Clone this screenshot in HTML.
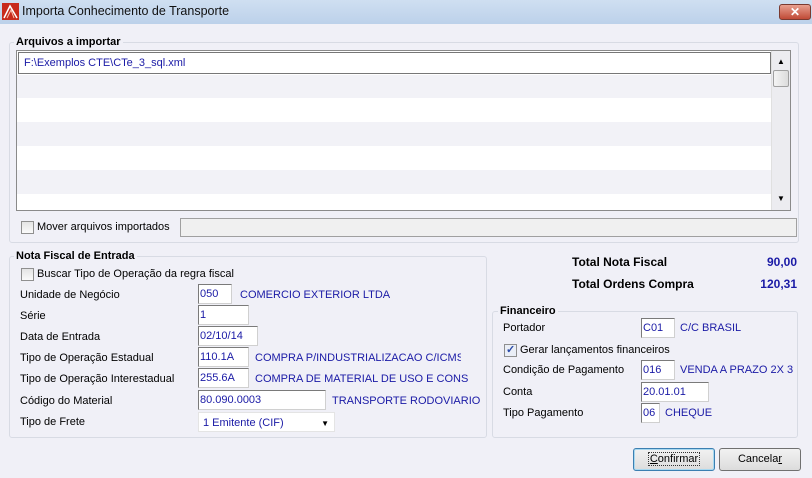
<!DOCTYPE html>
<html><head><meta charset="utf-8"><style>
*{box-sizing:border-box;margin:0;padding:0}
body{width:812px;height:478px;overflow:hidden;background:#f0f0f7;font-family:"Liberation Sans",sans-serif;font-size:11px;color:#000;position:relative}
.a{position:absolute;white-space:nowrap}
.title{left:0;top:0;width:812px;height:24px;background:linear-gradient(#cfdff1,#bcd1ea);}
.grp{position:absolute;border:1px solid #d8dbe4;border-radius:3px}
.gl{position:absolute;font-weight:bold;background:#f0f0f7;padding:0 2px;line-height:13px}
.inp{position:absolute;height:20px;background:#fff;border:1px solid #7a7a7a;border-right-color:#d0d0d0;border-bottom-color:#d0d0d0;color:#1a1aa6;padding:3px 1px;line-height:13px}
.blue{color:#1a1aa6}
.lb{line-height:13px}
.cb{position:absolute;width:13px;height:13px;border:1px solid #8f8f8f;background:linear-gradient(#e4e4e4,#fafafa)}
.btn{position:absolute;height:23px;border:1px solid #707070;border-radius:3px;background:linear-gradient(#f2f2f2,#dcdcdc);text-align:center;line-height:21px}
</style></head><body>
<div class="a title"></div>
<svg class="a" style="left:2px;top:3px" width="17" height="17" viewBox="0 0 17 17"><rect width="17" height="17" fill="#c82a1c"/><path d="M2 15L8 3L15 15" stroke="#fff" stroke-width="1.5" fill="none"/><path d="M5 15L9 7L12 15" stroke="#f8c0b0" stroke-width="1" fill="none"/></svg>
<div class="a" style="left:22px;top:4px;font-size:12.5px;color:#111">Importa Conhecimento de Transporte</div>
<div class="a" style="left:779px;top:4px;width:32px;height:16px;border:1px solid #7a3a30;border-radius:3px;background:linear-gradient(#e8a090,#c04a36);color:#fff;font-weight:bold;text-align:center;line-height:14px;font-size:12px">✕</div>

<div class="grp" style="left:9px;top:42px;width:790px;height:201px"></div>
<div class="gl" style="left:14px;top:36px">Arquivos a importar</div>
<div class="a" style="left:16px;top:50px;width:775px;height:161px;border:1px solid #8a8a8a;background:#fff">
 <div class="a" style="left:1px;top:1px;width:753px;height:22px;border:1px solid #777;background:#fff;color:#1a1aa6;padding:4px 5px">F:\Exemplos CTE\CTe_3_sql.xml</div>
 <div class="a" style="left:0;top:24px;width:754px;height:23px;background:#f2f2f7"></div>
 <div class="a" style="left:0;top:71px;width:754px;height:24px;background:#f2f2f7"></div>
 <div class="a" style="left:0;top:119px;width:754px;height:24px;background:#f2f2f7"></div>
 <div class="a" style="left:754px;top:0;width:19px;height:159px;background:#ececf0;border-left:1px solid #e0e0e0"></div>
 <div class="a" style="left:760px;top:6px;font-size:8px">▲</div>
 <div class="a" style="left:756px;top:19px;width:16px;height:17px;border:1px solid #a0a0a0;border-radius:2px;background:linear-gradient(90deg,#f4f4f4,#dcdcdc)"></div>
 <div class="a" style="left:760px;top:143px;font-size:8px">▼</div>
</div>
<div class="cb" style="left:21px;top:221px"></div>
<div class="a lb" style="left:37px;top:221px">Mover arquivos importados</div>
<div class="a" style="left:180px;top:218px;width:617px;height:19px;border:1px solid #a0a0a0;background:#f0f0f0"></div>

<div class="grp" style="left:9px;top:256px;width:478px;height:182px"></div>
<div class="gl" style="left:14px;top:250px">Nota Fiscal de Entrada</div>
<div class="cb" style="left:21px;top:268px"></div>
<div class="a lb" style="left:37px;top:268px">Buscar Tipo de Operação da regra fiscal</div>
<div class="a lb" style="left:20px;top:289px">Unidade de Negócio</div>
<div class="inp" style="left:198px;top:284px;width:34px">050</div>
<div class="a lb blue" style="left:240px;top:289px">COMERCIO EXTERIOR LTDA</div>
<div class="a lb" style="left:20px;top:310px">Série</div>
<div class="inp" style="left:198px;top:305px;width:51px">1</div>
<div class="a lb" style="left:20px;top:331px">Data de Entrada</div>
<div class="inp" style="left:198px;top:326px;width:60px">02/10/14</div>
<div class="a lb" style="left:20px;top:352px">Tipo de Operação Estadual</div>
<div class="inp" style="left:198px;top:347px;width:51px">110.1A</div>
<div class="a lb blue" style="left:255px;top:352px;width:206px;overflow:hidden">COMPRA P/INDUSTRIALIZACAO C/ICMS</div>
<div class="a lb" style="left:20px;top:373px">Tipo de Operação Interestadual</div>
<div class="inp" style="left:198px;top:368px;width:51px">255.6A</div>
<div class="a lb blue" style="left:255px;top:373px">COMPRA DE MATERIAL DE USO E CONS</div>
<div class="a lb" style="left:20px;top:395px">Código do Material</div>
<div class="inp" style="left:198px;top:390px;width:128px">80.090.0003</div>
<div class="a lb blue" style="left:332px;top:395px">TRANSPORTE RODOVIARIO</div>
<div class="a lb" style="left:20px;top:416px">Tipo de Frete</div>
<div class="a" style="left:198px;top:412px;width:137px;height:20px;background:#fff;border:1px solid #e4e4e4;color:#1a1aa6;padding:4px 4px;line-height:13px">1 Emitente (CIF)<span style="position:absolute;right:5px;top:4px;color:#000;font-size:8px">▼</span></div>

<div class="a" style="left:572px;top:255px;font-weight:bold;font-size:12px">Total Nota Fiscal</div>
<div class="a blue" style="left:740px;top:255px;width:57px;text-align:right;font-weight:bold;font-size:12px">90,00</div>
<div class="a" style="left:572px;top:277px;font-weight:bold;font-size:12px">Total Ordens Compra</div>
<div class="a blue" style="left:740px;top:277px;width:57px;text-align:right;font-weight:bold;font-size:12px">120,31</div>

<div class="grp" style="left:492px;top:311px;width:306px;height:127px"></div>
<div class="gl" style="left:498px;top:305px">Financeiro</div>
<div class="a lb" style="left:503px;top:322px">Portador</div>
<div class="inp" style="left:641px;top:318px;width:34px">C01</div>
<div class="a lb blue" style="left:680px;top:322px">C/C BRASIL</div>
<div class="cb" style="left:504px;top:344px;background:#eaeef6"><span style="position:absolute;left:1px;top:-2px;color:#2a4aa8;font-size:11px;font-weight:bold">✓</span></div>
<div class="a lb" style="left:520px;top:344px">Gerar lançamentos financeiros</div>
<div class="a lb" style="left:503px;top:364px">Condição de Pagamento</div>
<div class="inp" style="left:641px;top:360px;width:34px">016</div>
<div class="a lb blue" style="left:680px;top:364px">VENDA A PRAZO 2X 3</div>
<div class="a lb" style="left:503px;top:386px">Conta</div>
<div class="inp" style="left:641px;top:382px;width:68px">20.01.01</div>
<div class="a lb" style="left:503px;top:407px">Tipo Pagamento</div>
<div class="inp" style="left:641px;top:403px;width:19px">06</div>
<div class="a lb blue" style="left:665px;top:407px">CHEQUE</div>

<div class="btn" style="left:633px;top:448px;width:82px;border-color:#3c7fb1;box-shadow:inset 0 0 0 1px #a8d8f0"><span style="outline:1px dotted #333;padding:0 1px"><u>C</u>onfirmar</span></div>
<div class="btn" style="left:719px;top:448px;width:82px">Cancela<u>r</u></div>
</body></html>
